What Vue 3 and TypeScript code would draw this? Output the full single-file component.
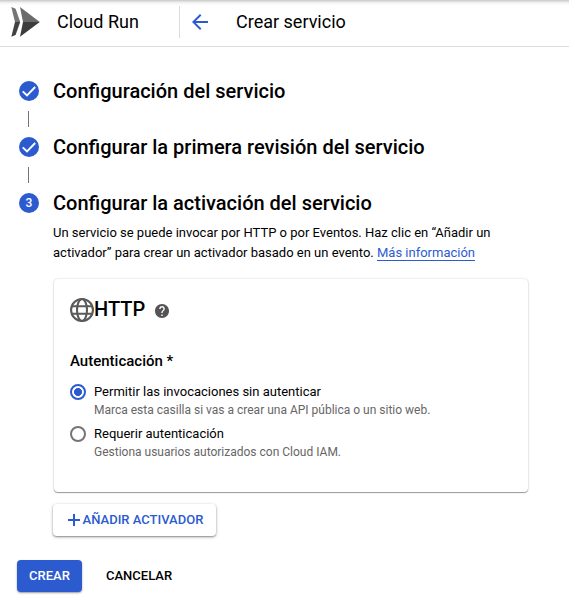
<script setup lang="ts">
import { ref } from 'vue'

interface Option {
  id: string
  label: string
  hint: string
}

const doneSteps: string[] = ['Configuración del servicio', 'Configurar la primera revisión del servicio']

const options: Option[] = [
  {
    id: 'public',
    label: 'Permitir las invocaciones sin autenticar',
    hint: 'Marca esta casilla si vas a crear una API pública o un sitio web.',
  },
  {
    id: 'private',
    label: 'Requerir autenticación',
    hint: 'Gestiona usuarios autorizados con Cloud IAM.',
  },
]

const selected = ref<string>('public')
</script>

<template>
  <div class="page">
    <header class="topbar">
      <svg class="logo" width="30" height="30" viewBox="0 0 30 30">
        <path d="M1.3 0 5.6 1.7 10.2 15H5z" fill="#757575" />
        <path d="M5 15h5.2L5.6 28 1.3 29.7z" fill="#424242" />
        <path d="M10 0 29.8 15H13z" fill="#6b6b6b" />
        <path d="M13 15h16.8L10 29.7z" fill="#3c3c3c" />
      </svg>
      <span class="product">Cloud Run</span>
      <div class="divider"></div>
      <svg class="back" width="16" height="16" viewBox="0 0 16 16">
        <path d="M16 7H3.8l5.6-5.6L8 0 0 8l8 8 1.4-1.4L3.8 9H16z" fill="#2c5bd0" />
      </svg>
      <h1 class="title">Crear servicio</h1>
    </header>

    <main class="content">
      <template v-for="step in doneSteps" :key="step">
        <div class="step">
          <span class="badge">
            <svg width="20" height="20" viewBox="0 0 20 20">
              <path d="M3.7 10.4 8 14.5 16.2 6" fill="none" stroke="#fff" stroke-width="1.9" />
            </svg>
          </span>
          <h2>{{ step }}</h2>
        </div>
        <div class="connector"></div>
      </template>
      <div class="step">
        <span class="badge">3</span>
        <h2>Configurar la activación del servicio</h2>
      </div>

      <section class="body">
        <p class="intro">
          Un servicio se puede invocar por HTTP o por Eventos. Haz clic en “Añadir un<br />
          activador” para crear un activador basado en un evento. <a class="link">Más información</a>
        </p>

        <div class="card">
          <div class="card-head">
            <svg width="24" height="24" viewBox="0 0 24 24" fill="none" stroke="#5a5a5a" stroke-width="2.1">
              <circle cx="12" cy="12" r="10.95" />
              <ellipse cx="12" cy="12" rx="5" ry="10.95" />
              <path d="M2 8.3h20M2 15.7h20" />
            </svg>
            <h3>HTTP</h3>
            <svg class="help" width="14" height="14" viewBox="2 2 20 20">
              <path
                fill="#545454"
                d="M12 2C6.48 2 2 6.48 2 12s4.48 10 10 10 10-4.48 10-10S17.52 2 12 2zm1 17h-2v-2h2v2zm2.07-7.75-.9.92C13.45 12.9 13 13.5 13 15h-2v-.5c0-1.1.45-2.1 1.17-2.83l1.24-1.26c.37-.36.59-.86.59-1.41 0-1.1-.9-2-2-2s-2 .9-2 2H8c0-2.21 1.79-4 4-4s4 1.79 4 4c0 .88-.36 1.68-.93 2.25z"
              />
            </svg>
          </div>

          <h4>Autenticación *</h4>
          <div v-for="o in options" :key="o.id" class="option" @click="selected = o.id">
            <span class="radio" :class="{ on: selected === o.id }"></span>
            <div>
              <div class="label">{{ o.label }}</div>
              <div class="hint">{{ o.hint }}</div>
            </div>
          </div>
        </div>

        <button class="btn add">
          <svg width="12" height="12" viewBox="0 0 12 12">
            <path d="M5 0h2v5h5v2H7v5H5V7H0V5h5z" fill="#2c5bd0" />
          </svg>
          <span>AÑADIR ACTIVADOR</span>
        </button>
      </section>

      <div class="actions">
        <button class="btn primary">CREAR</button>
        <button class="btn plain">CANCELAR</button>
      </div>
    </main>
  </div>
</template>

<style>
body {
  background: #fff;
}
</style>

<style scoped>
.page {
  height: 615px;
  overflow: hidden;
  font-family: Roboto, 'Liberation Sans', sans-serif;
  color: #000;
}
h1,
h2,
h3,
h4,
p {
  margin: 0;
}
.topbar {
  box-sizing: border-box;
  height: 47px;
  padding: 0 0 2px 10px;
  display: flex;
  align-items: center;
  border-bottom: 1px solid #dcdcdc;
  background: linear-gradient(#cecece 0, #d2d2d2 1px, #ececec 2px, #fafafa 4px, #fff 6px);
}
.product {
  width: 122px;
  margin-left: 17px;
  font-size: 18px;
  line-height: 22px;
}
.divider {
  width: 1px;
  height: 32px;
  background: #dcdcdc;
}
.back {
  margin-left: 12px;
}
.title {
  margin-left: 28px;
  font-size: 18px;
  line-height: 22px;
  font-weight: 400;
}
.content {
  padding-top: 32px;
}
.step {
  height: 24px;
  padding-left: 19px;
  display: flex;
  align-items: center;
}
.badge {
  width: 20px;
  height: 20px;
  display: flex;
  align-items: center;
  justify-content: center;
  border-radius: 50%;
  background: #2c5bd0;
  color: #fff;
  font-size: 12px;
  font-weight: 500;
}
h2 {
  margin-left: 14px;
  font-size: 20px;
  line-height: 24px;
  font-weight: 500;
  white-space: nowrap;
}
.connector {
  width: 1px;
  height: 16px;
  margin: 8px 0 8px 28px;
  background: #757575;
}
.body {
  padding-left: 53px;
}
.intro {
  padding-top: 8px;
  font-size: 13px;
  line-height: 20px;
  white-space: nowrap;
}
.link {
  color: #2c5bd0;
  border-bottom: 1px solid #2c5bd0;
}
.card {
  box-sizing: border-box;
  width: 474px;
  height: 213px;
  margin: 16px 0 0 1px;
  padding: 18px 16px 0;
  border-radius: 4px;
  background: #fff;
  box-shadow: 0 1px 1px rgba(0, 0, 0, 0.36), 0 0 2px rgba(0, 0, 0, 0.22);
}
.card-head {
  height: 26px;
  display: flex;
  align-items: center;
}
h3 {
  padding-bottom: 2px;
  font-size: 20px;
  line-height: 24px;
  font-weight: 500;
}
.help {
  margin: 2px 0 0 10px;
}
h4 {
  margin: 28px 0 12px;
  font-size: 15px;
  line-height: 20px;
  font-weight: 500;
}
.option {
  height: 42px;
  display: flex;
}
.radio {
  box-sizing: border-box;
  flex: none;
  width: 16px;
  height: 16px;
  margin: 1px 8px 0 0;
  border: 2px solid #757575;
  border-radius: 50%;
}
.radio.on {
  border-color: #2c5bd0;
  background: radial-gradient(circle, #2c5bd0 3.7px, #fff 4.3px);
}
.label {
  font-size: 13px;
  line-height: 18px;
}
.hint {
  font-size: 12px;
  line-height: 18px;
  color: #666;
}
.btn {
  height: 32px;
  display: flex;
  align-items: center;
  justify-content: center;
  padding: 0;
  border: 0;
  border-radius: 4px;
  background: transparent;
  font: 500 13px/16px Roboto, 'Liberation Sans', sans-serif;
}
.add {
  width: 163px;
  margin-top: 12px;
  gap: 3px;
  padding-left: 2px;
  background: #fff;
  color: #2c5bd0;
  box-shadow: 0 1px 2px rgba(0, 0, 0, 0.4), 0 1px 4px rgba(0, 0, 0, 0.14);
}
.actions {
  display: flex;
  padding: 24px 0 0 17px;
}
.primary {
  width: 65px;
  background: #2c5bd0;
  color: #fff;
  box-shadow: 0 1px 2px rgba(0, 0, 0, 0.4);
}
.plain {
  margin-left: 24px;
  color: #000;
}
</style>
